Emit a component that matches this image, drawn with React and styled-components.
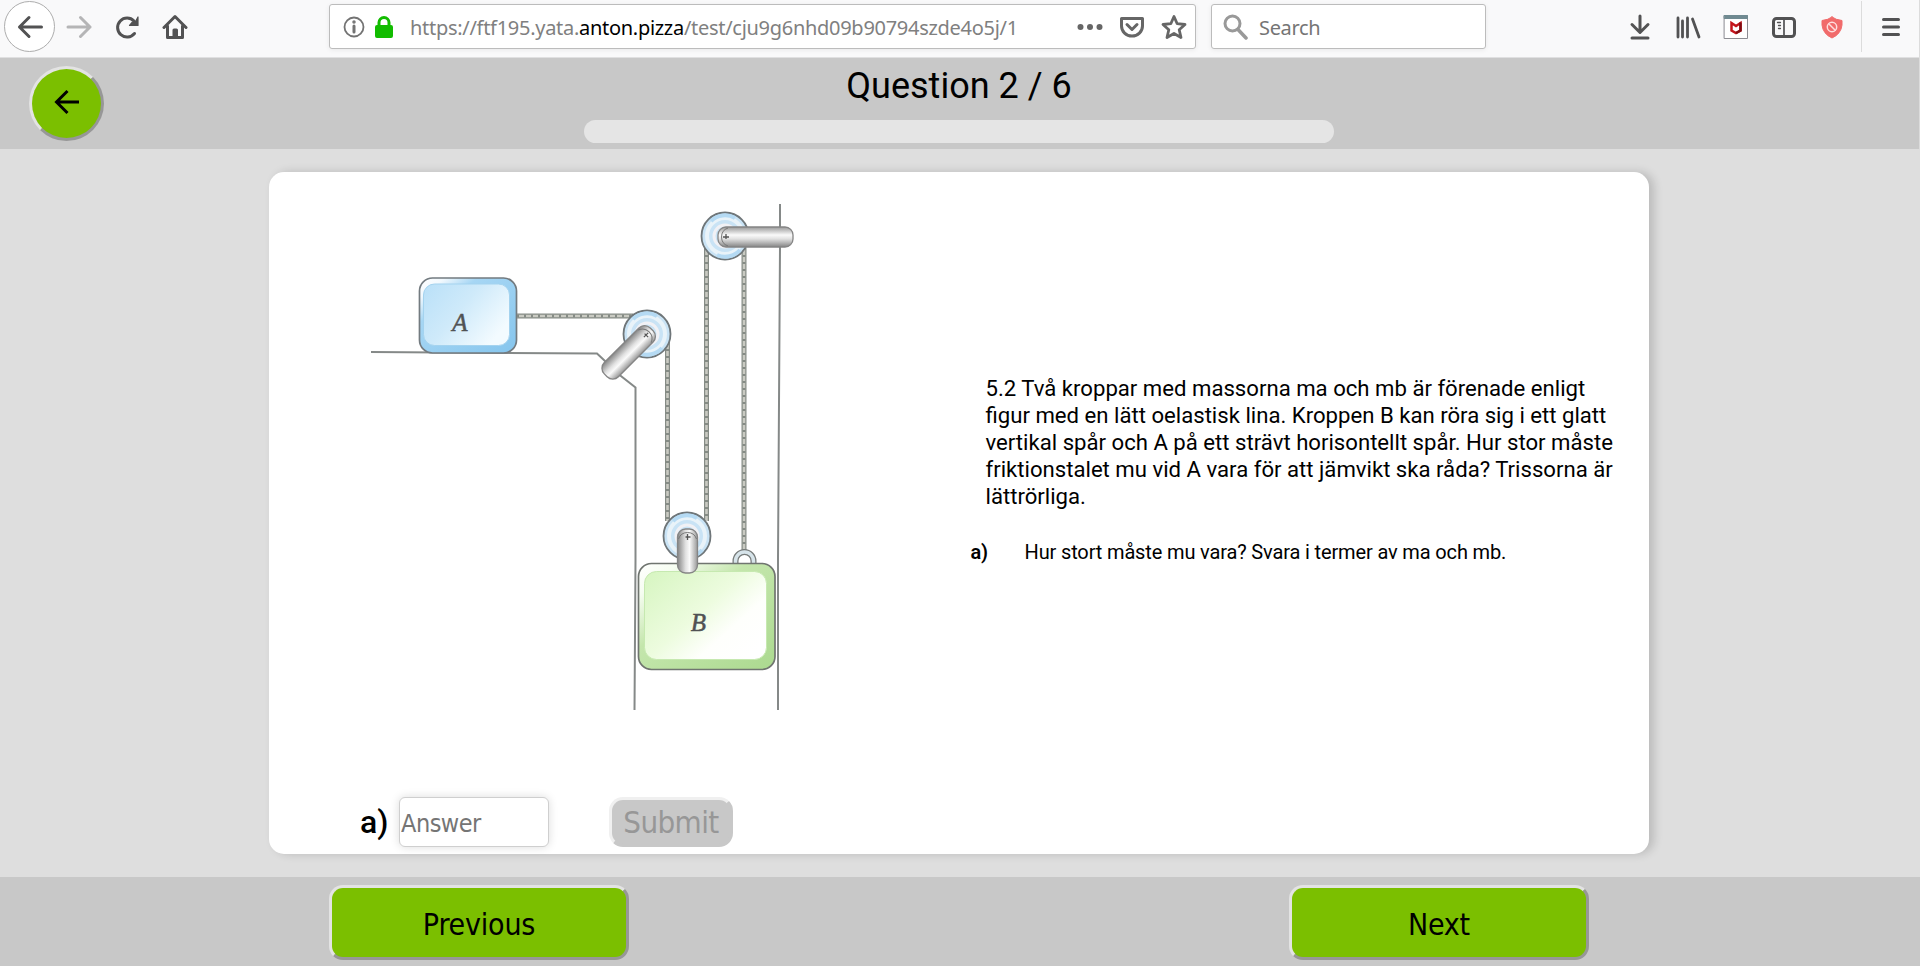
import React from 'react';
import styled, { createGlobalStyle } from 'styled-components';

const Global = createGlobalStyle`
  * { box-sizing: border-box; }
  body { margin: 0; background: #dedede; font-family: Roboto, sans-serif; color: #000; overflow: hidden; }
  button, input { font-family: 'DejaVu Sans Condensed', 'DejaVu Sans', sans-serif; font-stretch: condensed; }
`;

const Page = styled.div`
  height: 966px;
  display: flex;
  flex-direction: column;
`;

const Toolbar = styled.nav`
  height: 58px;
  flex: none;
  display: flex;
  align-items: flex-start;
  background: #f9f9fa;
  border-bottom: 1px solid #e0e0e1;
  border-right: 1px solid #dcdcdc;
  font-family: 'Noto Sans', sans-serif;
`;

const NavButtons = styled.div`
  width: 329px;
  height: 53px;
  display: flex;
  align-items: center;
  padding-left: 4px;
`;

const BackCircle = styled.div`
  width: 51px;
  height: 51px;
  border: 1px solid #adadad;
  border-radius: 50%;
  background: #fff;
  display: flex;
  align-items: center;
  justify-content: center;
`;

const Icon = styled.svg.attrs((p) => ({
  fill: 'none',
  stroke: p.stroke || '#525253',
  strokeWidth: p.strokeWidth || 3,
  strokeLinecap: p.strokeLinecap || 'round',
  strokeLinejoin: p.strokeLinejoin || 'round',
}))`
  width: ${(p) => p.$w || 26}px;
  height: 26px;
  flex: none;
  display: block;
  margin-left: ${(p) => p.$gap || 0}px;
`;

const Field = styled.div`
  width: ${(p) => p.$w}px;
  height: 45px;
  flex: none;
  margin-top: 4px;
  margin-right: ${(p) => p.$gap || 0}px;
  padding-left: ${(p) => p.$pad}px;
  border: 1px solid #bcbcbc;
  border-radius: 3px;
  background: #fff;
  box-shadow: 0 1px 5px rgba(0, 0, 0, 0.07);
  display: flex;
  align-items: center;
`;

const Url = styled.span`
  width: 683px;
  flex: none;
  padding-left: 16px;
  padding-top: 1px;
  font-size: 20px;
  letter-spacing: -0.29px;
  white-space: nowrap;
  color: #808080;
  b { font-weight: 400; color: #000; }
`;

const Placeholder = styled.span`
  padding-left: 11px;
  padding-top: 1px;
  font-size: 20px;
  letter-spacing: -0.35px;
  color: #757575;
`;

const Extensions = styled.div`
  height: 53px;
  display: flex;
  align-items: center;
`;

const Divider = styled.i`
  width: 1px;
  height: 51px;
  margin-left: 16px;
  background: #dcdcdc;
`;

const Header = styled.header`
  height: 91px;
  flex: none;
  display: flex;
  padding-left: 29px;
  background: #c8c8c8;
  border-right: 1px solid #dcdcdc;
`;

const raised = `
  border: 3px solid;
  border-color: #e3e3e3 #979797 #979797 #e3e3e3;
  background: #7bbf00;
`;

const RoundButton = styled.button`
  ${raised}
  width: 75px;
  height: 75px;
  margin-top: 8px;
  padding: 0 2px 3px 0;
  border-radius: 50%;
  display: flex;
  align-items: center;
  justify-content: center;
`;

const Progress = styled.div`
  width: 750px;
  margin-left: 480px;
  display: flex;
  flex-direction: column;
  align-items: center;
`;

const Title = styled.h1`
  margin: 7px 0 13px;
  font-size: 36px;
  font-weight: 400;
  line-height: 42px;
  white-space: nowrap;
`;

const Track = styled.div`
  width: 750px;
  height: 23px;
  border-radius: 11.5px;
  background: #e5e5e5;
`;

const Main = styled.main`
  height: 728px;
  flex: none;
  padding: 23px 0 0 269px;
`;

const Card = styled.section`
  width: 1380px;
  height: 682px;
  border-radius: 15px;
  background: #fff;
  box-shadow: 5px 0 10px rgba(0, 0, 0, 0.16);
  display: flex;
  flex-direction: column;
`;

const Content = styled.div`
  height: 625px;
  display: flex;
`;

const Figure = styled.svg`
  width: 590px;
  height: 570px;
  flex: none;
  display: block;
`;

const Statement = styled.div`
  padding: 203px 0 0 112px;
  font-size: 20px;
  line-height: 27px;
`;

const Paragraph = styled.p`
  width: 650px;
  margin: 0 0 29px 14.5px;
  font-size: 22.15px;
  white-space: pre-line;
`;

const SubQuestion = styled.div`
  display: flex;
  gap: 37px;
  letter-spacing: -0.14px;
  b { width: 17px; margin-left: -0.5px; font-weight: 600; }
`;

const AnswerRow = styled.form`
  height: 50px;
  display: flex;
  align-items: center;
  padding-left: 91px;
`;

const Label = styled.label`
  width: 39px;
  padding-bottom: 1px;
  font-size: 32px;
  font-weight: 500;
`;

const AnswerInput = styled.input`
  width: 150px;
  height: 50px;
  padding: 2px 1px 0;
  border: 1px solid #cfcfcf;
  border-radius: 6px;
  font-size: 25px;
  letter-spacing: -0.5px;
  box-shadow: 0 0 10px rgba(0, 0, 0, 0.14);
  &::placeholder { color: #757575; opacity: 1; }
`;

const Submit = styled.button`
  width: 124px;
  height: 50px;
  margin-left: 60px;
  padding: 0;
  border: 3px solid;
  border-color: #f0f0f0 #c8c8c8 #c8c8c8 #f0f0f0;
  border-radius: 14px;
  background: #c8c8c8;
  color: #979797;
  font-size: 31px;
  letter-spacing: -0.6px;
`;

const Footer = styled.footer`
  height: 89px;
  flex: none;
  display: flex;
  gap: 660px;
  padding: 8px 0 0 329px;
  background: #c8c8c8;
`;

const StepButton = styled.button`
  ${raised}
  width: 300px;
  height: 75px;
  padding: 3px 0 0;
  border-radius: 14px;
  font-size: 30px;
  letter-spacing: -0.2px;
`;

const Pulley = ({ x, y }) => (
  <g fill="none">
    <circle cx={x} cy={y} r="23.5" fill="#c9e3f5" stroke="#6f7679" strokeWidth="1.8" />
    <circle cx={x} cy={y} r="18" stroke="#e9f3f9" strokeWidth="4" />
    <circle cx={x} cy={y} r="11" stroke="#f1f1f5" strokeWidth="3" />
    <path d={`M${x - 14} ${y - 15}A20 20 0 0 1 ${x + 10} ${y - 18}M${x + 15} ${y + 14}A20 20 0 0 1 ${x - 8} ${y + 19}`} stroke="#b5daf3" strokeWidth="4" />
  </g>
);

const Rope = ({ d }) => (
  <g fill="none">
    <path d={d} stroke="#858b85" strokeWidth="5" />
    <path d={d} stroke="#c9cac2" strokeWidth="2.600" />
    <path d={d} stroke="#858b85" strokeWidth="3" strokeDasharray="2 5" />
  </g>
);

const Arm = ({ x, y, length, angle }) => (
  <g transform={`translate(${x} ${y}) rotate(${angle})`}>
    <rect x="-8" y="-10" width={length} height="20" rx="8" fill="url(#steel)" stroke="#858585" strokeWidth="1.3" />
    <path d="M2-9a9.5 9.5 0 0 0 0 18" fill="none" stroke="#777" />
    <path d="M-3 0h6M0-3v5" stroke="#555" strokeWidth="1.3" />
  </g>
);

const Mechanism = () => (
  <Figure viewBox="269 172 590 570">
    <defs>
      <linearGradient id="steel" x2="0" y2="1">
        <stop stopColor="#999" /><stop offset=".4" stopColor="#fafafa" /><stop offset=".6" stopColor="#e0e0e0" /><stop offset="1" stopColor="#858585" />
      </linearGradient>
      <linearGradient id="blueRim" x2="1" y2="1">
        <stop stopColor="#fff" /><stop offset=".13" stopColor="#f2f9fe" /><stop offset=".3" stopColor="#a6d6f4" /><stop offset="1" stopColor="#85c5ed" />
      </linearGradient>
      <linearGradient id="blueFace" x2="1" y2=".6">
        <stop stopColor="#b9e0f8" /><stop offset=".5" stopColor="#cfeafa" /><stop offset="1" stopColor="#f3fbff" />
      </linearGradient>
      <linearGradient id="greenRim" x2="1" y2="1">
        <stop stopColor="#fff" /><stop offset=".15" stopColor="#f6fdf1" /><stop offset=".4" stopColor="#c4e6ac" /><stop offset="1" stopColor="#abd98f" />
      </linearGradient>
      <linearGradient id="greenFace" x2="1" y2=".8">
        <stop stopColor="#d6f5c0" /><stop offset=".5" stopColor="#edfcdf" /><stop offset=".75" stopColor="#fefffc" /><stop offset="1" stopColor="#fff" />
      </linearGradient>
    </defs>
    <g fill="none" stroke="#858988" strokeWidth="2">
      <path d="M371 352L597 353.500L605 361L619 374.5L635.5 387.5V560L634.500 710" />
      <path d="M780 204V247L778 560V710" />
    </g>
    <rect x="419.500" y="278" width="97" height="75" rx="13" fill="url(#blueRim)" stroke="#737b80" strokeWidth="1.7" />
    <rect x="423.500" y="284" width="86" height="61.500" rx="11" fill="url(#blueFace)" stroke="#a4d3ef" strokeWidth="1" />
    <text x="460" y="330.500" textAnchor="middle" fontFamily="Liberation Serif, serif" fontStyle="italic" fontSize="25" fill="#505254" stroke="#505254" strokeWidth=".5">A</text>
    <Rope d="M517 316H633" />
    <Rope d="M667.500 342V521" />
    <Rope d="M706.500 248V521" />
    <Rope d="M744 248V550" />
    <Pulley x={647} y={334} />
    <Arm x={646} y={335} length={65} angle={135} />
    <Pulley x={725} y={236} />
    <Arm x={726} y={237} length={75} angle={0} />
    <path d="M735.500 565V561a9 9 0 0 1 18 0v4" fill="none" stroke="#777b7a" strokeWidth="6" />
    <path d="M735.500 565V561a9 9 0 0 1 18 0v4" fill="none" stroke="#d7e4ea" strokeWidth="3.500" />
    <rect x="638.500" y="563.500" width="136.500" height="106" rx="13" fill="url(#greenRim)" stroke="#707570" strokeWidth="1.7" />
    <rect x="644.500" y="571.500" width="122" height="88" rx="12" fill="url(#greenFace)" stroke="#c6e9b0" strokeWidth="1" />
    <text x="698.500" y="630.500" textAnchor="middle" fontFamily="Liberation Serif, serif" fontStyle="italic" fontSize="25" fill="#505254" stroke="#505254" strokeWidth=".5">B</text>
    <Pulley x={687} y={536} />
    <Arm x={687.5} y={537} length={44} angle={90} />
  </Figure>
);

export default function App() {
  return (
    <Page>
      <Global />
      <Toolbar>
        <NavButtons>
          <BackCircle><Icon viewBox="0 0 26 26"><path d="M24.500 13H2.500M12 3.500L2.500 13L12 22.500" /></Icon></BackCircle>
          <Icon $gap={11} viewBox="0 0 26 26" stroke="#b5b5b6"><path d="M2 13H24M14.500 3.500L24 13L14.500 22.500" /></Icon>
          <Icon $gap={22} viewBox="0 0 26 26"><path d="M20.500 19.500A9.500 9.500 0 1 1 20 7" /><path d="M24 3V11.500H15.500L18.500 8L21.500 7.500Z" fill="#525253" strokeWidth="1.200" /></Icon>
          <Icon $gap={22} viewBox="0 0 26 26"><path d="M2 13.500L13 2.500L24 13.500M5.500 12V23.500H20.500V12" /><path d="M12 22.500V16H14.500V22.500" strokeWidth="3" /></Icon>
        </NavButtons>
        <Field $w={867} $pad={13} $gap={15}>
          <Icon $w={22} viewBox="0 0 22 26" stroke="#737373" strokeWidth="1.800"><circle cx="11" cy="13" r="9.500" /><path d="M11 12V18" strokeWidth="3" /><circle cx="11" cy="8" r="1" strokeWidth="1.500" /></Icon>
          <Icon $w={20} $gap={9} viewBox="0 0 20 26" stroke="#12bc00"><path d="M5 12V8.500a5 5 0 0 1 10 0V12" /><rect x="2" y="12" width="16" height="11" rx="1" fill="#12bc00" strokeWidth="2" /></Icon>
          <Url>https://ftf195.yata.<b>anton.pizza</b>/test/cju9g6nhd09b90794szde4o5j/1</Url>
          <Icon viewBox="0 0 26 26" stroke="none"><g fill="#666"><circle cx="3.500" cy="13" r="3" /><circle cx="13" cy="13" r="3" /><circle cx="22.500" cy="13" r="3" /></g></Icon>
          <Icon $gap={16} viewBox="0 0 26 26" stroke="#666"><path d="M2.500 4.500H23.500V12a10.500 10 0 0 1-21 0Z" /><path d="M8 10.500L13 15.500L18 10.500" /></Icon>
          <Icon $gap={16} viewBox="0 0 26 26" stroke="#666" strokeWidth="2.800"><path d="M13 2.500L16.200 9.700L24 10.500L18.200 15.800L20 23.500L13 19.500L6 23.500L7.800 15.800L2 10.500L9.800 9.700Z" /></Icon>
        </Field>
        <Field $w={275} $pad={10} $gap={143}>
          <Icon viewBox="0 0 26 26" stroke="#999"><circle cx="10.500" cy="9.500" r="7.500" /><path d="M16 15.500L24 24" strokeWidth="3.500" /></Icon>
          <Placeholder>Search</Placeholder>
        </Field>
        <Extensions>
          <Icon $w={22} viewBox="0 0 22 26"><path d="M11 2V17.500M3 10.500L11 18.500L19 10.500M3 24H19" /></Icon>
          <Icon $gap={24} viewBox="0 0 26 26"><path d="M3 4V23M7.500 7V23M12.500 4V23M17.500 5L24 23" strokeWidth="2.800" /></Icon>
          <Icon $gap={22} viewBox="0 0 26 26" strokeWidth="1"><path d="M1.500 1.500H24.500V24.500H1.500Z" fill="#fff" stroke="#8c8c92" /><path d="M1.500 1.500H24.500V4.500H1.500Z" fill="#708a91" stroke="#708a91" /><path d="M8.500 9L13 12L17.500 9V16.500L13 19L8.500 16.500Z" stroke="#c3141b" strokeWidth="2.500" strokeLinejoin="miter" /><path d="M17.500 8.500V16.500L13 19" stroke="#820c12" strokeWidth="2.500" strokeLinejoin="miter" strokeLinecap="butt" /></Icon>
          <Icon $gap={22} viewBox="0 0 26 26"><rect x="2.500" y="4.500" width="21" height="18" rx="3" /><path d="M13 4V22" strokeWidth="1.700" /><path d="M6.500 8.500H9.500M7.500 11.500H9.500M7.500 14.500H9.500" strokeWidth="1.300" /></Icon>
          <Icon $gap={22} viewBox="0 0 26 26" stroke="#fdd" strokeWidth="1.500"><path d="M13 3Q17 6 23 6.500V11Q22 20 13 24Q4 20 3 11V6.500Q9 6 13 3Z" fill="#f16b6b" stroke="#f16b6b" strokeWidth="1" /><circle cx="13" cy="13" r="4.700" /><path d="M10 10L16 16" /></Icon>
          <Divider />
          <Icon $gap={17} viewBox="0 0 26 26"><path d="M4.500 5.500H19.500M4.500 13H19.500M4.500 20.500H19.500" /></Icon>
        </Extensions>
      </Toolbar>
      <Header>
        <RoundButton aria-label="Back"><Icon viewBox="0 0 26 26" stroke="#000" strokeLinecap="butt" strokeLinejoin="miter"><path d="M26 13H3M14.500 2L3.500 13L14.500 24" /></Icon></RoundButton>
        <Progress>
          <Title>Question 2 / 6</Title>
          <Track />
        </Progress>
      </Header>
      <Main>
        <Card>
          <Content>
            <Mechanism />
            <Statement>
              <Paragraph>{`5.2 Två kroppar med massorna ma och mb är förenade enligt
                figur med en lätt oelastisk lina. Kroppen B kan röra sig i ett glatt
                vertikal spår och A på ett strävt horisontellt spår. Hur stor måste
                friktionstalet mu vid A vara för att jämvikt ska råda? Trissorna är
                lättrörliga.`}</Paragraph>
              <SubQuestion><b>a)</b><span>Hur stort måste mu vara? Svara i termer av ma och mb.</span></SubQuestion>
            </Statement>
          </Content>
          <AnswerRow>
            <Label>a)</Label>
            <AnswerInput placeholder="Answer" />
            <Submit type="button">Submit</Submit>
          </AnswerRow>
        </Card>
      </Main>
      <Footer>
        <StepButton>Previous</StepButton>
        <StepButton>Next</StepButton>
      </Footer>
    </Page>
  );
}
